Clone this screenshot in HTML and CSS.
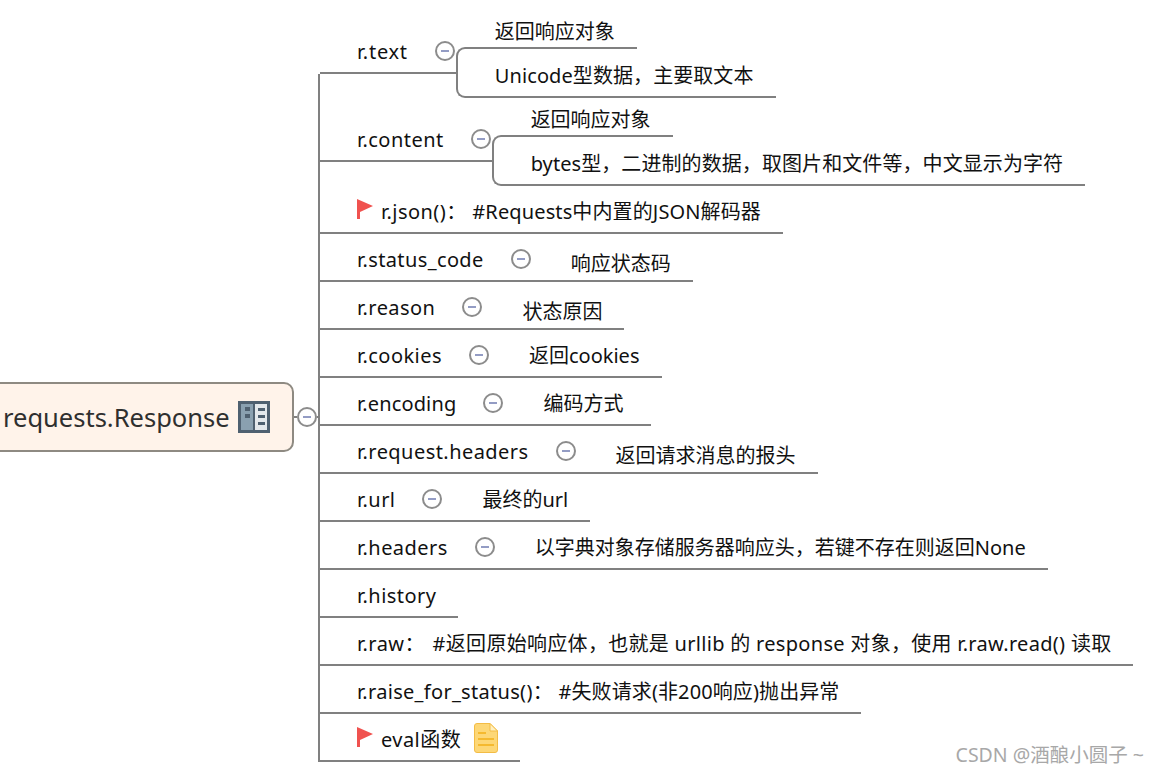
FILE: index.html
```html
<!DOCTYPE html>
<html lang="zh-CN">
<head>
<meta charset="utf-8">
<title>requests.Response</title>
<link rel="stylesheet" href="styles.css">
</head>
<body>
<main class="map">
  <div class="root-group">
    <div class="root">
      <span class="root-text">requests.Response</span>
      <svg class="root-icon" width="32" height="32" viewBox="0 0 32 32">
        <rect width="32" height="32" fill="#4f6070"/>
        <rect x="3" y="3" width="12" height="26" fill="#8aa0b0"/>
        <rect x="17" y="3" width="12" height="26" fill="#e4e8ec"/>
        <rect x="7" y="6" width="5" height="4" fill="#4f6070"/>
        <rect x="7" y="13" width="5" height="4" fill="#4f6070"/>
        <rect x="20" y="7" width="7" height="3" fill="#4f6070"/>
        <rect x="20" y="14" width="7" height="3" fill="#4f6070"/>
        <rect x="20" y="21" width="7" height="3" fill="#4f6070"/>
      </svg>
    </div>
    <span class="stub-a"></span>
    <span class="toggle"></span>
    <span class="stub-b"></span>
  </div>
  <div class="branches">
    <div class="row row-first">
      <div class="head">
        <span class="label label-wide">r.text</span>
        <span class="toggle toggle-row"></span>
      </div>
      <div class="kids">
        <div class="kid-top">返回响应对象</div>
        <div class="kid-bottom">Unicode型数据，主要取文本</div>
      </div>
    </div>
    <div class="row row-second">
      <div class="head">
        <span class="label">r.content</span>
        <span class="toggle toggle-row"></span>
      </div>
      <div class="kids">
        <div class="kid-top">返回响应对象</div>
        <div class="kid-bottom">bytes型，二进制的数据，取图片和文件等，中文显示为字符</div>
      </div>
    </div>
    <div class="row row-third">
      <div class="head">
        <svg class="flag" width="16" height="20" viewBox="0 0 16 20"><path d="M0 0 L16 7 L3 13 L3 20 L0 20 Z" fill="#f0524f"/></svg>
        <span class="label">r.json()： <span class="comment-json">#Requests中内置的JSON解码器</span></span>
      </div>
    </div>
    <div class="row">
      <div class="head">
        <span class="label label-status">r.status_code</span>
        <span class="toggle toggle-row"></span>
        <span class="child">响应状态码</span>
      </div>
    </div>
    <div class="row">
      <div class="head">
        <span class="label">r.reason</span>
        <span class="toggle toggle-row"></span>
        <span class="child">状态原因</span>
      </div>
    </div>
    <div class="row">
      <div class="head head-cookies">
        <span class="label">r.cookies</span>
        <span class="toggle toggle-row"></span>
        <span class="child child-high">返回cookies</span>
      </div>
    </div>
    <div class="row">
      <div class="head head-loose">
        <span class="label label-tight">r.encoding</span>
        <span class="toggle toggle-row"></span>
        <span class="child child-high">编码方式</span>
      </div>
    </div>
    <div class="row">
      <div class="head">
        <span class="label">r.request.headers</span>
        <span class="toggle toggle-row"></span>
        <span class="child">返回请求消息的报头</span>
      </div>
    </div>
    <div class="row">
      <div class="head">
        <span class="label">r.url</span>
        <span class="toggle toggle-row"></span>
        <span class="child child-high">最终的url</span>
      </div>
    </div>
    <div class="row">
      <div class="head">
        <span class="label">r.headers</span>
        <span class="toggle toggle-row"></span>
        <span class="child child-high">以字典对象存储服务器响应头，若键不存在则返回None</span>
      </div>
    </div>
    <div class="row">
      <div class="head">
        <span class="label">r.history</span>
      </div>
    </div>
    <div class="row">
      <div class="head">
        <span class="label">r.raw： <span class="comment-raw">#返回原始响应体，也就是 urllib 的 response 对象，使用 r.raw.read() 读取</span></span>
      </div>
    </div>
    <div class="row">
      <div class="head">
        <span class="label label-raise">r.raise_for_status()： <span class="comment-raise">#失败请求(非200响应)抛出异常</span></span>
      </div>
    </div>
    <div class="row">
      <div class="head">
        <svg class="flag" width="16" height="20" viewBox="0 0 16 20"><path d="M0 0 L16 7 L3 13 L3 20 L0 20 Z" fill="#f0524f"/></svg>
        <span class="label">eval函数</span>
        <svg class="note" width="24" height="30" viewBox="0 0 24 30">
          <path d="M3 .5 H16 L23.5 8 V27 A2.5 2.5 0 0 1 21 29.5 H3 A2.5 2.5 0 0 1 .5 27 V3 A2.5 2.5 0 0 1 3 .5 Z" fill="#fdd776" stroke="#f3bc45"/>
          <path d="M16 .5 V8 H23.5 Z" fill="#fff0c0" stroke="#f3bc45"/>
          <rect x="4" y="9" width="8" height="2" fill="#f5b92f"/>
          <rect x="4" y="15" width="16" height="2" fill="#f5b92f"/>
          <rect x="4" y="21" width="16" height="2" fill="#f5b92f"/>
        </svg>
      </div>
    </div>
  </div>
  <div class="watermark">CSDN @酒酿小圆子 ~</div>
</main>
</body>
</html>
```

FILE: styles.css
```css
html, body {
  margin: 0;
  padding: 0;
  background: #fff;
}
body {
  width: 1158px;
  height: 772px;
  overflow: hidden;
  font-family: "Noto Sans", "Noto Sans CJK SC", sans-serif;
  font-size: 20px;
  line-height: 28px;
  color: #111;
}
.map {
  position: relative;
  display: flex;
  align-items: flex-start;
  height: 772px;
}
.root-group {
  display: flex;
  align-items: center;
  margin-top: 382px;
  margin-left: -10px;
}
.root {
  display: flex;
  align-items: center;
  gap: 8px;
  box-sizing: border-box;
  width: 304px;
  height: 70px;
  padding-left: 11px;
  background: #fff3ea;
  border: 2px solid #8e8a82;
  border-radius: 10px;
}
.root-text {
  font-size: 25.5px;
  line-height: 34px;
  color: #2f2f2f;
  white-space: nowrap;
}
.root-icon {
  flex: none;
}
.stub-a, .stub-b {
  height: 2px;
  background: #808080;
}
.stub-a { width: 3px; }
.stub-b { width: 1px; }
.toggle {
  display: flex;
  align-items: center;
  justify-content: center;
  flex: none;
  box-sizing: border-box;
  width: 20px;
  height: 20px;
  background: #fff;
  border: 2px solid #8c8c8c;
  border-radius: 50%;
}
.toggle::after {
  content: "";
  width: 8px;
  height: 2px;
  background: #939cc4;
}
.branches {
  display: flex;
  flex-direction: column;
  align-items: flex-start;
}
.row {
  display: flex;
  align-items: flex-start;
  border-left: 2px solid #808080;
}
.row-first {
  height: 74px;
  border-left-color: transparent;
}
.row-second {
  height: 88px;
}
.row-third .head {
  height: 72px;
}
.head {
  display: flex;
  align-items: flex-end;
  box-sizing: border-box;
  height: 48px;
  padding-left: 37px;
  padding-right: 22px;
  border-bottom: 2px solid #808080;
  white-space: pre;
}
.head-loose {
  padding-right: 28px;
}
.head-cookies {
  padding-right: 23px;
}
.row-first .head, .row-second .head {
  height: 100%;
  padding-right: 1px;
}
.label {
  margin-bottom: 6px;
  letter-spacing: .45px;
}
.label-wide { letter-spacing: .75px; }
.label-tight { letter-spacing: .15px; }
.label-status { letter-spacing: .38px; }
.label-raise { letter-spacing: .3px; }
.comment-json { letter-spacing: .12px; }
.comment-raw { margin-left: 2px; letter-spacing: .3px; }
.comment-raise { letter-spacing: .1px; }
.toggle-row {
  margin-left: 27px;
  margin-bottom: 11px;
}
.child {
  margin-left: 40px;
  margin-bottom: 2px;
}
.child-high {
  margin-bottom: 6px;
}
.flag {
  flex: none;
  margin-right: 8px;
  margin-bottom: 13px;
}
.note {
  flex: none;
  margin-left: 13px;
  margin-bottom: 7px;
}
.kids {
  display: flex;
  flex-direction: column;
  align-items: flex-start;
  margin-top: 18px;
  white-space: nowrap;
}
.row-second .kids {
  margin-top: 32px;
}
.kid-top {
  box-sizing: border-box;
  height: 31px;
  margin-left: 9px;
  padding-left: 30px;
  padding-right: 22px;
  border-bottom: 2px solid #808080;
}
.kid-bottom {
  position: relative;
  box-sizing: border-box;
  height: 49px;
  padding-top: 13px;
  padding-left: 39px;
  padding-right: 22px;
  letter-spacing: .08px;
}
.kid-bottom::before {
  content: "";
  position: absolute;
  left: 0;
  top: -2px;
  box-sizing: border-box;
  width: 10px;
  height: 26px;
  border-top: 2px solid #808080;
  border-left: 2px solid #808080;
  border-top-left-radius: 9px;
}
.kid-bottom::after {
  content: "";
  position: absolute;
  left: 0;
  right: 0;
  bottom: 0;
  box-sizing: border-box;
  height: 26px;
  border-bottom: 2px solid #808080;
  border-left: 2px solid #808080;
  border-bottom-left-radius: 9px;
}
.watermark {
  position: absolute;
  right: 14px;
  bottom: 4px;
  font-size: 19.5px;
  line-height: 26px;
  color: #a8a8a8;
  white-space: nowrap;
}
```
